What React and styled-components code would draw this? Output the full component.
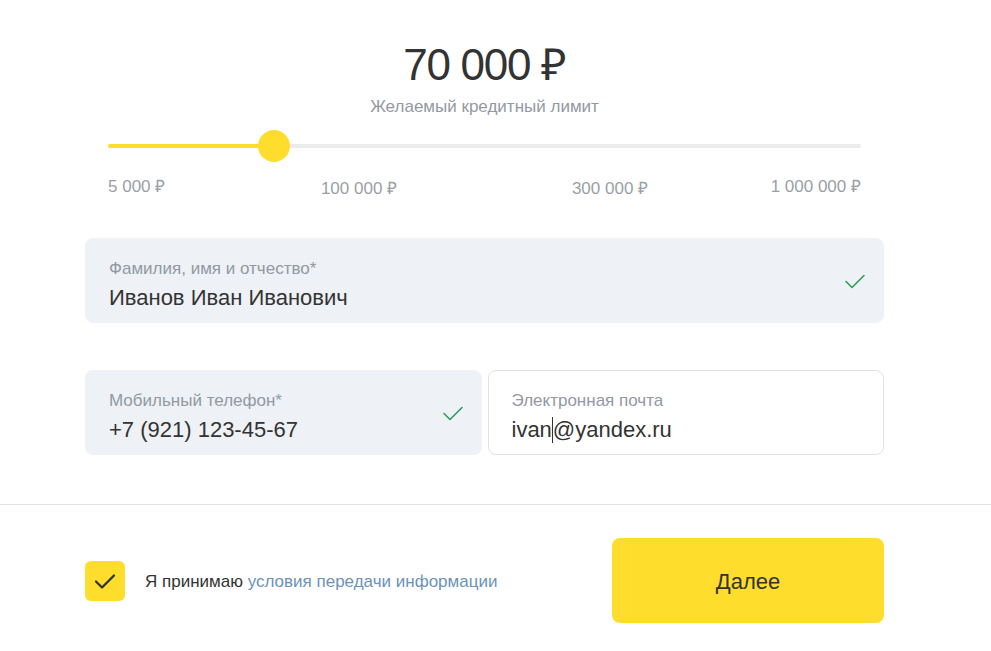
import styled, { createGlobalStyle } from "styled-components"

const GlobalStyle = createGlobalStyle`
    body {
        margin: 0;
        background: #fff;
        font-family: "Liberation Sans", Arial, sans-serif;
        color: #333;
    }
`

const ticks = [
    { label: '5 000 ₽', align: 'left', shift: 0 },
    { label: '100 000 ₽', align: 'center', shift: 2 },
    { label: '300 000 ₽', align: 'center', shift: 2 },
    { label: '1 000 000 ₽', align: 'right', shift: 0 },
]

const CheckIcon = ({ size = 24, color = '#2d9f5a', width = 1.6 }) => (
    <svg width={size} height={size} viewBox="0 0 24 24" fill="none">
        <path d="M3 12.5l6 6L21 6.5" stroke={color} strokeWidth={width} strokeLinecap="round" strokeLinejoin="round" />
    </svg>
)

const Field = ({ label, value, filled, valid, caret }) => (
    <FieldBox $filled={filled}>
        <FieldBody>
            <FieldLabel>{label}</FieldLabel>
            <FieldValue>
                {caret ? <>{value.slice(0, 4)}<Caret />{value.slice(4)}</> : value}
            </FieldValue>
        </FieldBody>
        {valid && <FieldStatus><CheckIcon /></FieldStatus>}
    </FieldBox>
)

export default function App() {
    const percent = 0.22
    return (
        <Page>
            <GlobalStyle />
            <Column>
                <Amount>70 000 ₽</Amount>
                <Caption>Желаемый кредитный лимит</Caption>
                <Slider>
                    <Track>
                        <Fill style={{ width: `${percent * 100}%` }} />
                        <Thumb style={{ left: `${percent * 100}%` }} />
                    </Track>
                </Slider>
                <Ticks>
                    {ticks.map(t => (
                        <Tick key={t.label} $align={t.align} $shift={t.shift}>{t.label}</Tick>
                    ))}
                </Ticks>
                <Fields>
                    <Field label="Фамилия, имя и отчество*" value="Иванов Иван Иванович" filled valid />
                    <Row>
                        <Field label="Мобильный телефон*" value="+7 (921) 123-45-67" filled valid />
                        <Field label="Электронная почта" value="ivan@yandex.ru" caret />
                    </Row>
                </Fields>
            </Column>
            <Divider />
            <Footer>
                <Agree>
                    <Checkbox><CheckIcon size={24} color="#333" width={2.3} /></Checkbox>
                    <AgreeText>Я принимаю <Link>условия передачи информации</Link></AgreeText>
                </Agree>
                <Button>Далее</Button>
            </Footer>
        </Page>
    )
}

const Page = styled.div`
    width: 991px;
    height: 651px;
    overflow: hidden;
`
const Column = styled.div`
    width: 799px;
    margin-left: 85px;
    padding-top: 40px;
    display: flex;
    flex-direction: column;
`
const Amount = styled.h1`
    margin: 0;
    font-size: 44px;
    line-height: 50px;
    font-weight: 400;
    letter-spacing: -1.3px;
    text-align: center;
    color: #333;
`
const Caption = styled.div`
    margin-top: 7px;
    font-size: 17px;
    line-height: 20px;
    text-align: center;
    color: #9299a2;
`
const Slider = styled.div`
    margin-top: 13px;
    padding: 0 23px;
    height: 32px;
    display: flex;
    align-items: center;
`
const Track = styled.div`
    position: relative;
    flex: 1;
    height: 4px;
    border-radius: 2px;
    background: #ebebeb;
`
const Fill = styled.div`
    height: 100%;
    border-radius: 2px;
    background: #ffdd2d;
`
const Thumb = styled.div`
    position: absolute;
    top: 50%;
    width: 32px;
    height: 32px;
    border-radius: 50%;
    background: #ffdd2d;
    transform: translate(-50%, -50%);
`
const Ticks = styled.div`
    margin: 16px 23px 0;
    display: grid;
    grid-template-columns: 1fr 2fr 2fr 1fr;
    height: 20px;
`
const Tick = styled.span`
    font-size: 17px;
    line-height: 18px;
    color: #999fa6;
    white-space: nowrap;
    margin-top: ${p => p.$shift}px;
    display: flex;
    justify-content: ${p => p.$align === 'left' ? 'flex-start' : p.$align === 'right' ? 'flex-end' : 'center'};
`
const Fields = styled.div`
    margin-top: 40px;
    display: flex;
    flex-direction: column;
    gap: 47px;
`
const FieldBox = styled.div`
    box-sizing: border-box;
    height: 85px;
    display: flex;
    border-radius: 8px;
    background: ${p => p.$filled ? '#eef1f5' : '#fff'};
    border: 1px solid ${p => p.$filled ? '#eef1f5' : '#dfe2e6'};
`
const FieldBody = styled.div`
    flex: 1;
    padding: 20px 0 0 23px;
`
const FieldLabel = styled.div`
    font-size: 17px;
    line-height: 20px;
    color: #9299a2;
`
const FieldValue = styled.div`
    margin-top: 6px;
    font-size: 22px;
    line-height: 26px;
    color: #333;
`
const Caret = styled.span`
    display: inline-block;
    width: 1px;
    height: 26px;
    vertical-align: top;
    background: #333;
`
const FieldStatus = styled.div`
    width: 56px;
    display: flex;
    align-items: center;
    justify-content: center;
`
const Row = styled.div`
    display: grid;
    grid-template-columns: 1fr 1fr;
    gap: 6px;
`
const Divider = styled.hr`
    margin: 49px 0 0;
    border: 0;
    height: 1px;
    background: #e1e1e1;
`
const Footer = styled.div`
    width: 799px;
    margin: 33px 0 0 85px;
    display: flex;
    align-items: center;
    justify-content: space-between;
`
const Agree = styled.label`
    display: flex;
    align-items: center;
    gap: 20px;
`
const Checkbox = styled.span`
    width: 40px;
    height: 40px;
    border-radius: 6px;
    background: #ffdd2d;
    display: flex;
    align-items: center;
    justify-content: center;
`
const AgreeText = styled.span`
    font-size: 17px;
    line-height: 20px;
    padding-top: 3px;
    color: #333;
`
const Link = styled.a`
    color: #6b93ba;
    cursor: pointer;
`
const Button = styled.button`
    width: 272px;
    height: 85px;
    padding-top: 3px;
    border: 0;
    border-radius: 8px;
    background: #ffdd2d;
    font-family: inherit;
    font-size: 22px;
    color: #333;
    cursor: pointer;
`
